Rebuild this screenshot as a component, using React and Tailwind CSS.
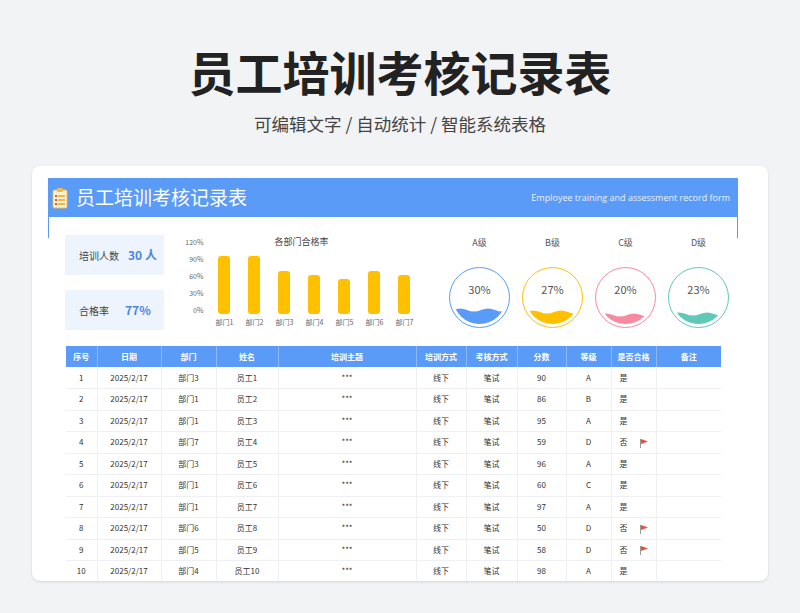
import React from "react";

const rows = [
  [1,"部门3","员工1","90","A","是",false],
  [2,"部门1","员工2","86","B","是",false],
  [3,"部门1","员工3","95","A","是",false],
  [4,"部门7","员工4","59","D","否",true],
  [5,"部门3","员工5","96","A","是",false],
  [6,"部门1","员工6","60","C","是",false],
  [7,"部门1","员工7","97","A","是",false],
  [8,"部门6","员工8","50","D","否",true],
  [9,"部门5","员工9","58","D","否",true],
  [10,"部门4","员工10","98","A","是",false],
];
const cols = [31,64,55,62,138,50,51,49,45,45,65];
const heads = ["序号","日期","部门","姓名","培训主题","培训方式","考核方式","分数","等级","是否合格","备注"];
const bars = [96,96,72,65,58,72,65];

function Flag() {
  return (
    <svg width="8" height="9" viewBox="0 0 8 9" className="ml-3 inline-block">
      <rect x="0" y="0" width="1" height="9" fill="#999" />
      <path d="M1 0 L8 2.5 L1 5 Z" fill="#e5533b" />
    </svg>
  );
}

function Circle({ label, pct, color, level }) {
  return (
    <div className="flex flex-col items-center w-[73px]">
      <div className="text-[9px] text-[#555] mb-[17px]">{label}</div>
      <div className="relative w-[61px] h-[61px] rounded-full border" style={{ borderColor: color }}>
        <div className="absolute inset-[3px] rounded-full overflow-hidden">
          <svg className="absolute bottom-0 left-0" width="55" height="55" viewBox="0 0 55 55">
            <path d={`M0 ${level} Q7 ${level - 3} 14 ${level} T28 ${level} T42 ${level} T56 ${level} L56 55 L0 55 Z`} fill={color} />
          </svg>
        </div>
        <div className="absolute top-[13px] w-full text-center text-[11px] text-[#555]">{pct}</div>
      </div>
    </div>
  );
}

export default function App() {
  const font = { fontFamily: '"Noto Sans CJK SC", "Noto Sans", sans-serif' };
  return (
    <div className="w-[800px] h-[613px] bg-[#f2f3f5] overflow-hidden" style={font}>
      <div className="pt-[40px] text-center text-[47px] font-bold leading-[62px] text-[#222]">员工培训考核记录表</div>
      <div className="mt-[10px] text-center text-[17.5px] leading-[24px] text-[#444]">可编辑文字 / 自动统计 / 智能系统表格</div>
      <div className="mx-[32px] mt-[30px] h-[415px] bg-white rounded-lg overflow-hidden pt-[12px] shadow-sm">
        <div className="ml-[16px] mr-[30px] h-[39px] bg-[#5b9bf8] flex items-center px-[4px]">
          <svg width="16" height="22" viewBox="0 0 16 22">
            <rect x="1" y="3" width="14" height="18" rx="1.5" fill="#fff3d6" stroke="#f0b84a" />
            <rect x="5" y="1" width="6" height="4" rx="1" fill="#f0b84a" />
            {[8,12,16].map(y => <g key={y}><rect x="3" y={y} width="2" height="2" fill="#e5533b"/><rect x="6" y={y} width="7" height="2" fill="#f0b84a"/></g>)}
          </svg>
          <div className="ml-[8px] text-[19px] text-white">员工培训考核记录表</div>
          <div className="ml-auto mr-[4px] text-[9px] text-[#e8f0ff]" style={{ fontFamily: '"Open Sans", sans-serif' }}>Employee training and assessment record form</div>
        </div>
        <div className="ml-[16px] mr-[30px] h-[21px] border-l border-r border-[#5b9bf8]" />
        <div className="flex mx-[33px] -mt-[3px] h-[110px]">
          <div className="flex flex-col gap-[15px] w-[100px]">
            <div className="h-[40px] bg-[#eef4fd] flex items-center pl-[14px]">
              <span className="text-[10px] text-[#444]">培训人数</span>
              <span className="ml-[9px] text-[12px] font-bold text-[#4a86e0]">30 人</span>
            </div>
            <div className="h-[40px] bg-[#eef4fd] flex items-center pl-[14px]">
              <span className="text-[10px] text-[#444]">合格率</span>
              <span className="ml-[16px] text-[12px] font-bold text-[#4a86e0]">77%</span>
            </div>
          </div>
          <div className="relative ml-[15px] w-[245px] h-[98px]">
            <div className="absolute left-[95px] top-0 text-[9px] text-[#444]">各部门合格率</div>
            <div className="absolute left-0 top-[3px] flex flex-col justify-between h-[76px] text-[7px] text-[#666] w-[24px] text-right leading-[8px]">
              <span>120%</span><span>90%</span><span>60%</span><span>30%</span><span>0%</span>
            </div>
            <div className="absolute left-[30px] top-[7px] h-[72px] w-[210px] flex items-end justify-around">
              {bars.map((b, i) => (
                <div key={i} className="w-[12px] bg-[#ffc000] rounded-[3px]" style={{ height: b * 0.6 + "px" }} />
              ))}
            </div>
            <div className="absolute left-[30px] top-[82px] w-[210px] flex justify-around text-[7px] text-[#666]">
              {bars.map((_, i) => <span key={i}>部门{i + 1}</span>)}
            </div>
          </div>
          <div className="flex ml-[20px] mt-[1px]">
            <Circle label="A级" pct="30%" color="#5b9bf8" level={41} />
            <Circle label="B级" pct="27%" color="#ffc000" level={43} />
            <Circle label="C级" pct="20%" color="#f68ba0" level={46} />
            <Circle label="D级" pct="23%" color="#5ec9b8" level={45} />
          </div>
        </div>
        <table className="ml-[34px] mt-[1px] border-collapse text-[8px] text-[#333]" style={{ tableLayout: "fixed", width: 655 }}>
          <colgroup>{cols.map((w, i) => <col key={i} style={{ width: w }} />)}</colgroup>
          <thead>
            <tr className="bg-[#5b9bf8] text-white h-[21px]">
              {heads.map(h => <th key={h} className="font-bold text-[8px] border-r border-[#8db8fb] last:border-r-0">{h}</th>)}
            </tr>
          </thead>
          <tbody>
            {rows.map(r => (
              <tr key={r[0]} className="h-[21.5px] border-b border-[#eef0f3]">
                <td className="text-center border-r border-[#eef0f3]">{r[0]}</td>
                <td className="text-center border-r border-[#eef0f3]">2025/2/17</td>
                <td className="text-center border-r border-[#eef0f3]">{r[1]}</td>
                <td className="text-center border-r border-[#eef0f3]">{r[2]}</td>
                <td className="text-center border-r border-[#eef0f3]">***</td>
                <td className="text-center border-r border-[#eef0f3]">线下</td>
                <td className="text-center border-r border-[#eef0f3]">笔试</td>
                <td className="text-center border-r border-[#eef0f3]">{r[3]}</td>
                <td className="text-center border-r border-[#eef0f3]">{r[4]}</td>
                <td className="pl-[8px] border-r border-[#eef0f3]">{r[5]}{r[6] && <Flag />}</td>
                <td />
              </tr>
            ))}
          </tbody>
        </table>
      </div>
    </div>
  );
}
